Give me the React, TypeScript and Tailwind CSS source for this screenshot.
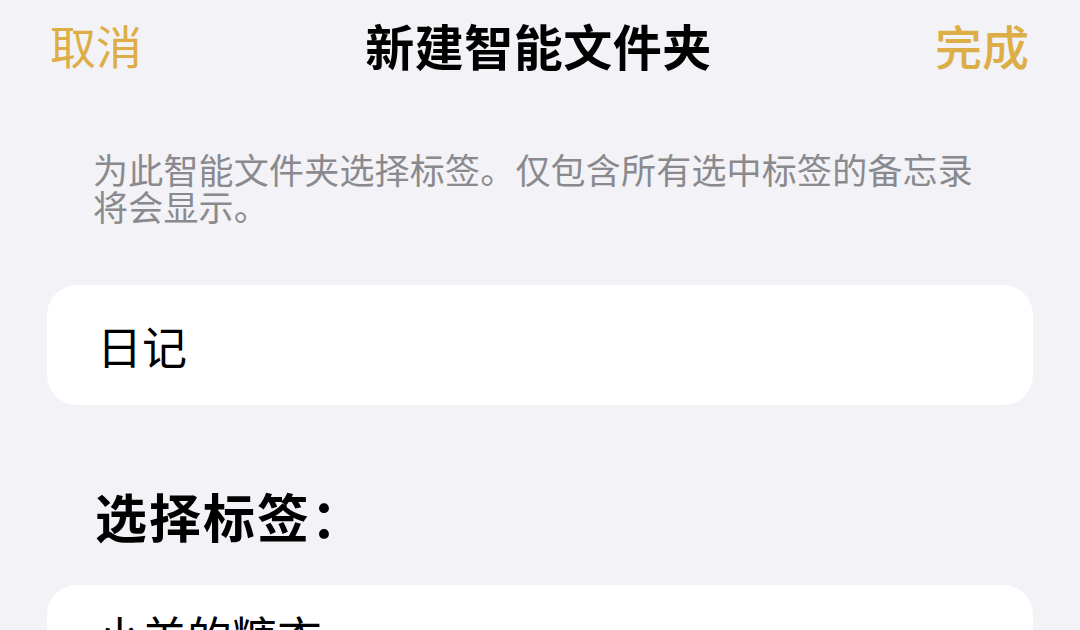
import React from "react";

const font = { fontFamily: '"Noto Sans CJK SC", "Noto Sans", sans-serif' };

const tags = ["小羊的糖衣"];

export default function App() {
  return (
    <div
      className="w-[1080px] h-[630px] overflow-hidden bg-[#f2f2f7] text-black"
      style={font}
    >
      {/* nav bar */}
      <div className="flex items-center justify-between h-[88px] pl-[50px] pr-[51px]">
        <button className="text-[46px] leading-none text-[#dcae45]">取消</button>
        <h1 className="text-[49px] leading-none font-bold tracking-[0.5px]">新建智能文件夹</h1>
        <button className="text-[47px] leading-none font-medium text-[#dcae45]">
          完成
        </button>
      </div>

      <div className="px-[47px]">
        <p className="mt-[62px] px-[46px] text-[35px] tracking-[0.2px] leading-[37px] text-[#8a8a8e]">
          为此智能文件夹选择标签。仅包含所有选中标签的备忘录将会显示。
        </p>

        <div className="mt-[61px] h-[120px] rounded-[30px] bg-white flex items-center px-[50px]">
          <span className="text-[45px] leading-none">日记</span>
        </div>

        <h2 className="mt-[85px] pl-[48px] text-[52px] leading-none font-bold tracking-[2px]">
          选择标签：
        </h2>

        <div className="mt-[43px] rounded-[30px] bg-white px-[50px] pt-[28px]">
          {tags.map((t) => (
            <div key={t} className="h-[120px] text-[45px] leading-none">
              {t}
            </div>
          ))}
        </div>
      </div>
    </div>
  );
}
